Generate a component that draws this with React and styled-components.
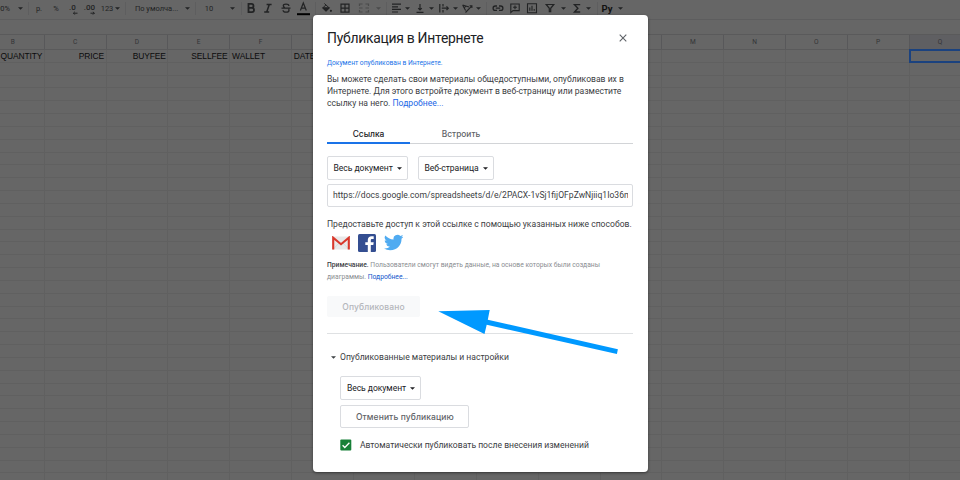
import React from "react";
import styled, { createGlobalStyle } from "styled-components";

const Global = createGlobalStyle`
  * { box-sizing: border-box; }
  body { margin: 0; overflow: hidden; background: #666; font-family: Roboto, "Liberation Sans", sans-serif; }
`;

const Page = styled.div`
  position: relative;
  width: 960px;
  height: 480px;
  overflow: hidden;
  background: #666;
`;

const Toolbar = styled.div`
  display: flex;
  align-items: center;
  height: 20px;
  padding-bottom: 3px;
  color: #222324;
  border-bottom: 1px solid #5d5d5e;
`;

const Tool = styled.div`
  flex: none;
  display: flex;
  align-items: center;
  justify-content: center;
  width: ${(p) => p.$w || 12}px;
  height: 14px;
  margin-left: ${(p) => p.$gap}px;
  font-size: 7.5px;
  white-space: nowrap;
  opacity: ${(p) => (p.$dim ? 0.4 : 1)};
  svg { display: block; flex: none; }
`;

const FontBadge = styled.b`
  color: #111;
  font-size: 9.5px;
  font-weight: 700;
`;

const Divider = styled.div`
  flex: none;
  width: 1px;
  height: 13px;
  margin-left: ${(p) => p.$gap}px;
  background: #5e5e5f;
`;

const Caret = styled.svg`
  flex: none;
  display: block;
  fill: currentColor;
`;

const Triangle = () => <Caret width="5" height="3" viewBox="0 0 5 3"><path d="M0 .2h5L2.5 2.8z" /></Caret>;

const FormulaBar = styled.div`
  height: 14px;
`;

const HeaderRow = styled.div`
  display: grid;
  grid-template-columns: 44.8px repeat(15, 61.77px);
  height: 16px;
  border-top: 1px solid #5a5a5b;
  border-bottom: 1px solid #5a5a5b;
`;

const HeaderCell = styled.div`
  display: flex;
  align-items: center;
  justify-content: center;
  padding-right: ${(p) => (p.$first ? 18 : 0)}px;
  border-right: 1px solid #58585a;
  background: ${(p) => (p.$active ? "#5f5f62" : "transparent")};
  color: #333436;
  font-size: 6.6px;
`;

const GridRow = styled.div`
  display: grid;
  grid-template-columns: 44.8px repeat(15, 61.77px);
  height: 12.84px;
  border-bottom: 1px solid #606060;
`;

const Cell = styled.div`
  display: flex;
  align-items: center;
  justify-content: ${(p) => (p.$right ? "flex-end" : "flex-start")};
  padding: 0 1.5px 0 2px;
  border-right: 1px solid #606060;
  outline: ${(p) => (p.$active ? "2px solid #1b427f" : "none")};
  outline-offset: -1px;
  color: #0c0c0c;
  font: 8.45px "Liberation Sans", sans-serif;
  letter-spacing: -0.1px;
  white-space: nowrap;
`;

const Dialog = styled.section`
  position: absolute;
  left: 312.5px;
  top: 15px;
  width: 335px;
  height: 456.5px;
  padding: 13px 15px 0 14.5px;
  border-radius: 4px;
  background: #fff;
  box-shadow: 0 1px 3px rgba(0, 0, 0, 0.45);
  color: #3c4043;
  font-size: 8.58px;
`;

const TitleRow = styled.header`
  display: flex;
  align-items: center;
  justify-content: space-between;
  height: 20px;
  padding-right: 6px;
`;

const Title = styled.h1`
  margin: 0;
  color: #202124;
  font-size: 13.9px;
  line-height: 20px;
  font-weight: 400;
  letter-spacing: -0.26px;
  white-space: nowrap;
`;

const Status = styled.div`
  margin-top: 9.5px;
  height: 11px;
  line-height: 11px;
  color: #1a73e8;
  font-size: 6.7px;
`;

const Text = styled.div`
  margin-top: ${(p) => p.$top}px;
  line-height: 12px;
  font-size: ${(p) => p.$size || 8.58}px;
  color: ${(p) => p.$color || "#3c4043"};
  white-space: nowrap;
  b { color: #3c4043; font-weight: 500; }
`;

const Link = styled.a`
  color: ${(p) => p.$color || "#1a66e6"};
`;

const Tabs = styled.nav`
  display: flex;
  margin-top: 16px;
  height: 19px;
  border-bottom: 1px solid #d2d4d7;
`;

const Tab = styled.div`
  width: ${(p) => p.$w}px;
  height: 19px;
  line-height: 19px;
  text-align: center;
  font-family: Inter, Roboto, sans-serif;
  font-size: 8.4px;
  font-weight: 500;
  color: ${(p) => (p.$active ? "#202124" : "#5f6368")};
  border-bottom: ${(p) => (p.$active ? "2px solid #1a73e8" : "0")};
`;

const Row = styled.div`
  display: flex;
  gap: 10px;
  margin-top: ${(p) => p.$top}px;
`;

const Select = styled.div`
  display: flex;
  align-items: center;
  justify-content: space-between;
  width: ${(p) => p.$w}px;
  height: 24px;
  padding: 0 5px 0 5.5px;
  border: 1px solid #dadce0;
  border-radius: 2px;
  color: #202124;
  font-size: 8.58px;
  letter-spacing: -0.05px;
  white-space: nowrap;
`;

const UrlField = styled.div`
  height: 23px;
  margin-top: 4px;
  padding: 0 4px 0 5px;
  border: 1px solid #dadce0;
  border-radius: 2px;
  line-height: 21px;
`;

const UrlText = styled.div`
  overflow: hidden;
  white-space: nowrap;
`;

const Share = styled.div`
  display: flex;
  align-items: center;
  gap: 8px;
  height: 18px;
  margin-top: 4px;
  padding-left: 4.5px;
`;

const Button = styled.div`
  display: flex;
  align-items: center;
  justify-content: center;
  width: ${(p) => p.$w}px;
  height: ${(p) => p.$h}px;
  margin-top: ${(p) => p.$top}px;
  border: 1px solid ${(p) => (p.$disabled ? "#f8f9fa" : "#dadce0")};
  border-radius: 2px;
  background: ${(p) => (p.$disabled ? "#f8f9fa" : "#fff")};
  color: ${(p) => (p.$disabled ? "#b4b6ba" : "#5f6368")};
  font-family: Inter, Roboto, sans-serif;
  font-size: 8.5px;
  font-weight: 500;
  letter-spacing: 0.1px;
  white-space: nowrap;
`;

const Rule = styled.div`
  height: 1px;
  margin-top: 16px;
  background: #dfe1e3;
`;

const Disclosure = styled.div`
  display: flex;
  align-items: center;
  gap: 4px;
  height: 12px;
  margin-top: 17px;
  padding-left: 4px;
  white-space: nowrap;
`;

const Settings = styled.div`
  padding-left: 13.4px;
`;

const CheckRow = styled.label`
  display: flex;
  align-items: center;
  gap: 7.5px;
  height: 12px;
  margin-top: 11px;
  white-space: nowrap;
`;

const Pointer = styled.svg`
  position: absolute;
  left: 430px;
  top: 300px;
`;

const icon = { width: 12, height: 12, viewBox: "0 0 12 12", fill: "none", stroke: "currentColor", strokeWidth: 1.2 };

const Dec = ({ label, right }) => (
  <svg width="14" height="14" viewBox="0 0 14 14">
    <text x="6.5" y="9.3" textAnchor="middle" fontSize="8" fontWeight="500" fill="currentColor">{label}</text>
    <path d={right ? "M7.5 12.2h4M9.9 10.8L11.3 12.2L9.9 13.6" : "M11.5 12.2H7.5M8.8 10.8L7.4 12.2L8.8 13.6"} stroke="currentColor" strokeWidth="1" fill="none" />
  </svg>
);
const Bold = () => <svg {...icon} strokeWidth="1.8"><path d="M3.5 1.9h3a2 2 0 0 1 0 4h-3zM3.5 5.9h3.4a2.1 2.1 0 0 1 0 4.2H3.5z" /></svg>;
const Italic = () => <svg {...icon} strokeWidth="1.5"><path d="M4.6 2.5h5M2.2 10h5M7.3 2.5L4.7 10" /></svg>;
const Strike = () => <svg {...icon} strokeWidth="1.3"><path d="M9 3.8C8.6 1.5 3.3 1.5 3.3 3.8c0 .9.8 1.5 1.6 1.8M3 8.2c.3 2.7 6 2.6 6 0 0-.6-.2-.9-.5-1.2M1.5 6.2h9" /></svg>;
const TextColor = () => (
  <svg width="13" height="15" viewBox="0 0 13 15" fill="none" stroke="currentColor">
    <path d="M3.4 9.5L6.3 2L9.3 9.5M4.4 7.2h3.9" strokeWidth="1.2" />
    <path d="M0 13.2h13" strokeWidth="2" stroke="#000" />
  </svg>
);
const Fill = () => <svg {...icon} strokeWidth="1"><path d="M3.4 1.5L8.3 6L5 9.2L1.7 6L5 2.8" /><path d="M1.7 5.8h6.6L5 9.2z" fill="currentColor" /><circle cx="9.9" cy="8.8" r="1.1" fill="currentColor" stroke="none" /></svg>;
const Borders = () => <svg {...icon}><path d="M2 2.2h8v8H2zM6 2v8M2 6.2h8" /></svg>;
const Merge = () => <svg {...icon}><path d="M4.5 2H1.5v2M7.5 2h3v2M4.5 10H1.5V8M7.5 10h3V8M1 6h3.5M11 6H7.5" /></svg>;
const Align = () => <svg {...icon}><path d="M2 2.2h9M2 4.8h6M2 7.4h9M2 10h6" /></svg>;
const VAlign = () => <svg {...icon}><path d="M2.5 10.4h7M6 2v6M4.2 6.2L6 8l1.8-1.8" /></svg>;
const Wrap = () => <svg {...icon}><path d="M1.8 2v8.5M5 2v2.4M5 8.1v2.4M3.8 6.2h6.4M8.5 4.4l1.8 1.8L8.5 8" /></svg>;
const Rotate = () => <svg {...icon} strokeWidth="1.1"><path d="M1.6 3l3 5.5M1.6 3L8 5M3.2 5.6l2-1.5M4.5 10.5L10.6 4.2M8.6 3.8h2.3V6" /></svg>;
const Chain = () => <svg {...icon} strokeWidth="1.3"><path d="M5 4H3.3a2.2 2.2 0 0 0 0 4.4H5M7 4h1.7a2.2 2.2 0 0 1 0 4.4H7M3.8 6.2h4.4" /></svg>;
const Comment = () => <svg {...icon} strokeWidth="1.1"><path d="M1.8 2h8.4v6.6H4L1.8 10.6zM6 3.4v3.8M4.1 5.3h3.8" /></svg>;
const Chart = () => <svg {...icon} strokeWidth="1.1"><path d="M1.5 1.7h9v9h-9zM3.8 5.4v3.4M6 3.7v5.1M8.2 7v1.8" /></svg>;
const Filter = () => <svg {...icon}><path d="M2.2 2.5h7.6L6.7 6.3V9.6H5.3V6.3z" /></svg>;
const Sigma = () => <svg {...icon} strokeWidth="1.4"><path d="M9.2 2.6H3.5l3.4 3.7L3.5 10h5.7" /></svg>;

const tools = [
  [-4, "00%", 14], [7, "caret"], [5, "|"], [4, "р."], [5, "%"],
  [4, <Dec label=".0" />, 14], [3, <Dec label=".00" right />, 14], [3, "123", 14], [0, "caret"], [5, "|"],
  [9, "По умолча...", 43], [6, "caret"], [5, "|"], [7, "10"], [14, "caret"], [6, "|"],
  [3, <Bold />], [5, <Italic />], [6, <Strike />], [5, <TextColor />, 13], [5, "|"],
  [5, <Fill />], [6, <Borders />], [7, <Merge />, 12, true], [5, "caret", 6, true], [5, "|"],
  [3, <Align />], [2, "caret"], [4, <VAlign />], [2, "caret"], [4, <Wrap />], [2, "caret"],
  [3, <Rotate />], [2, "caret"], [5, "|"], [5, <Chain />], [5, <Comment />], [5, <Chart />],
  [6, <Filter />], [4, "caret"], [5, <Sigma />], [2, "caret"], [6, "|"],
  [3, <FontBadge>Рy</FontBadge>], [4, "caret"],
];

const letters = ["B", "C", "D", "E", "F", "G", "H", "I", "J", "K", "L", "M", "N", "O", "P", "Q"];
const heads = ["QUANTITY", "PRICE", "BUYFEE", "SELLFEE", "WALLET", "DATE"];

const Gmail = () => (
  <svg width="18" height="14" viewBox="0 0 18 14">
    <rect x=".5" y=".5" width="17" height="13" rx="1" fill="#e9e9e9" />
    <path d="M1 13.5L7 7M17 13.5L11 7" stroke="#d0d0d0" strokeWidth=".7" />
    <path d="M1.2 13.5V1.7L9 8.2l7.8-6.5v11.8" fill="none" stroke="#d9382c" strokeWidth="2.1" />
  </svg>
);
const Facebook = () => (
  <svg width="18" height="18" viewBox="0 0 18 18">
    <rect width="18" height="18" rx="1.5" fill="#344e91" />
    <path d="M9.8 18V11H7.3V8.2h2.5V6.1c0-2.5 1.5-3.8 3.8-3.8h2.1v2.6h-1.4c-1.2 0-1.5.5-1.5 1.4v1.9h2.9l-.4 2.8h-2.5v7z" fill="#fff" />
  </svg>
);
const Twitter = () => (
  <svg width="19.5" height="19" viewBox="0 0 24 24" preserveAspectRatio="none">
    <path fill="#50abf1" d="M23.95 4.57a10 10 0 0 1-2.82.77 4.96 4.96 0 0 0 2.16-2.72c-.95.55-2 .95-3.13 1.18a4.92 4.92 0 0 0-8.38 4.48C7.69 8.1 4.07 6.13 1.64 3.16a4.92 4.92 0 0 0 1.52 6.57 4.9 4.9 0 0 1-2.23-.61v.06a4.92 4.92 0 0 0 3.95 4.83 5 5 0 0 1-2.21.08 4.94 4.94 0 0 0 4.6 3.42A9.87 9.87 0 0 1 0 19.54a13.99 13.99 0 0 0 7.55 2.21c9.05 0 14-7.5 14-13.98 0-.21 0-.42-.02-.63a9.94 9.94 0 0 0 2.46-2.55z" />
  </svg>
);

export default function App() {
  return (
    <Page>
      <Global />
      <Toolbar>
        {tools.map(([gap, item, w, dim], i) =>
          item === "|" ? <Divider key={i} $gap={gap} /> : (
            <Tool key={i} $gap={gap} $w={item === "caret" ? 6 : w} $dim={dim}>
              {item === "caret" ? <Triangle /> : item}
            </Tool>
          )
        )}
      </Toolbar>
      <FormulaBar />
      <HeaderRow>
        {letters.map((l, i) => <HeaderCell key={l} $first={i === 0} $active={l === "Q"}>{l}</HeaderCell>)}
      </HeaderRow>
      {Array.from({ length: 34 }, (_, r) => (
        <GridRow key={r}>
          {letters.map((l, c) => (
            <Cell key={l} $right={c < 4} $active={r === 0 && l === "Q"}>{r === 0 ? heads[c] : null}</Cell>
          ))}
        </GridRow>
      ))}
      <Dialog>
        <TitleRow>
          <Title>Публикация в Интернете</Title>
          <svg width="8" height="8" viewBox="0 0 8 8" stroke="#5f6368" strokeWidth="1.1"><path d="M.7.7l6.6 6.6M7.3.7L.7 7.3" /></svg>
        </TitleRow>
        <Status>Документ опубликован в Интернете.</Status>
        <Text $top={4.5}>
          Вы можете сделать свои материалы общедоступными, опубликовав их в<br />
          Интернете. Для этого встройте документ в веб-страницу или разместите<br />
          ссылку на него. <Link>Подробнее...</Link>
        </Text>
        <Tabs>
          <Tab $w={83} $active>Ссылка</Tab>
          <Tab $w={102}>Встроить</Tab>
        </Tabs>
        <Row $top={12}>
          <Select $w={81}>Весь документ<Triangle /></Select>
          <Select $w={76}>Веб-страница<Triangle /></Select>
        </Row>
        <UrlField>
          <UrlText>https://docs.google.com/spreadsheets/d/e/2PACX-1vSj1fijOFpZwNjiiq1Io36m</UrlText>
        </UrlField>
        <Text $top={10.5}>Предоставьте доступ к этой ссылке с помощью указанных ниже способов.</Text>
        <Share><Gmail /><Facebook /><Twitter /></Share>
        <Text $top={7.5} $size={6.75} $color="#8a8d91">
          <b>Примечание.</b> Пользователи смогут видеть данные, на основе которых были созданы<br />
          диаграммы. <Link $color="#1155cc">Подробнее...</Link>
        </Text>
        <Button $w={93} $h={21} $top={13} $disabled>Опубликовано</Button>
        <Rule />
        <Disclosure><Triangle />Опубликованные материалы и настройки</Disclosure>
        <Settings>
          <Row $top={13}><Select $w={81}>Весь документ<Triangle /></Select></Row>
          <Button $w={129} $h={23} $top={5}>Отменить публикацию</Button>
          <CheckRow>
            <svg width="12" height="12" viewBox="0 0 12 12"><rect x=".3" y=".5" width="11" height="11" rx="1" fill="#188038" /><path d="M2.6 6.2l2.2 2.3L9.4 3.8" fill="none" stroke="#fff" strokeWidth="1.3" /></svg>
            Автоматически публиковать после внесения изменений
          </CheckRow>
        </Settings>
      </Dialog>
      <Pointer width="195" height="60" viewBox="430 300 195 60">
        <path fill="#0099ff" d="M438.3 311.3L489.7 310L487.8 319.7L617.9 349.3L616.9 354L486.7 324.7L484.5 334z" />
      </Pointer>
    </Page>
  );
}
